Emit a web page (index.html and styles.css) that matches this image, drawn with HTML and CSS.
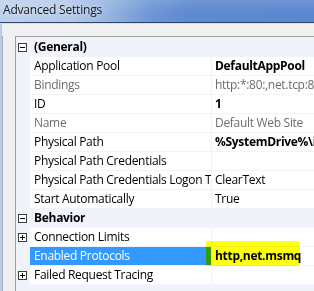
FILE: index.html
```html
<!DOCTYPE html>
<html>
<head>
<meta charset="utf-8">
<link rel="stylesheet" href="styles.css">
</head>
<body>
<div class="window">
  <div class="titlebar"><span class="title">Advanced Settings</span></div>
  <div class="client">
    <div class="grid">
      <div class="row cat">
        <span class="gutter"><svg class="tog" width="9" height="9" viewBox="0 0 9 9"><rect x="0.5" y="0.5" width="8" height="8" fill="#fff" stroke="#3c3c3c"/><path d="M2 4.5h5" stroke="#000"/></svg></span>
        <span class="name">(General)</span>
      </div>
      <div class="row"><span class="gutter"></span><span class="name">Application Pool</span><span class="value b">DefaultAppPool</span></div>
      <div class="row ro"><span class="gutter"></span><span class="name">Bindings</span><span class="value">http:*:80:,net.tcp:808:*,net.pipe:*</span></div>
      <div class="row"><span class="gutter"></span><span class="name">ID</span><span class="value b">1</span></div>
      <div class="row ro"><span class="gutter"></span><span class="name">Name</span><span class="value">Default Web Site</span></div>
      <div class="row"><span class="gutter"></span><span class="name">Physical Path</span><span class="value b">%SystemDrive%\inetpub\wwwroot</span></div>
      <div class="row"><span class="gutter"></span><span class="name">Physical Path Credentials</span><span class="value"></span></div>
      <div class="row"><span class="gutter"></span><span class="name">Physical Path Credentials Logon Type</span><span class="value">ClearText</span></div>
      <div class="row"><span class="gutter"></span><span class="name">Start Automatically</span><span class="value">True</span></div>
      <div class="row cat">
        <span class="gutter"><svg class="tog" width="9" height="9" viewBox="0 0 9 9"><rect x="0.5" y="0.5" width="8" height="8" fill="#fff" stroke="#3c3c3c"/><path d="M2 4.5h5" stroke="#000"/></svg></span>
        <span class="name">Behavior</span>
      </div>
      <div class="row">
        <span class="gutter"><svg class="tog" width="9" height="9" viewBox="0 0 9 9"><rect x="0.5" y="0.5" width="8" height="8" fill="#fff" stroke="#3c3c3c"/><path d="M2 4.5h5M4.5 2v5" stroke="#000"/></svg></span>
        <span class="name">Connection Limits</span><span class="value"></span>
      </div>
      <div class="row sel"><span class="gutter"></span><span class="name">Enabled Protocols</span><span class="value b">http,net.msmq</span></div>
      <div class="row">
        <span class="gutter"><svg class="tog" width="9" height="9" viewBox="0 0 9 9"><rect x="0.5" y="0.5" width="8" height="8" fill="#fff" stroke="#3c3c3c"/><path d="M2 4.5h5M4.5 2v5" stroke="#000"/></svg></span>
        <span class="name">Failed Request Tracing</span><span class="value"></span>
      </div>
    </div>
  </div>
  <div class="marker"></div>
</div>
</body>
</html>
```
FILE: styles.css
```css
html, body {
  margin: 0;
  padding: 0;
  overflow: hidden;
}
body {
  width: 314px;
  height: 291px;
  font-family: "Open Sans", "Noto Sans", sans-serif;
  font-size: 12px;
}
.window {
  position: relative;
  width: 314px;
  height: 291px;
  overflow: hidden;
  background: #f0f0f0;
  display: flex;
  flex-direction: column;
}
.titlebar {
  height: 22px;
  flex: none;
  background:
    linear-gradient(to bottom, rgba(255,255,255,0.12), rgba(255,255,255,0) 60%),
    linear-gradient(to right, #bed1ec 0px, #b2c8e8 70px, #95b3e0 110px, #6e96d6 150px, #5d89d0 190px, #5b87cf 314px);
  border-bottom: 1px solid #2c4468;
  box-shadow: 0 1px 0 #d4e0f0;
  display: flex;
  align-items: center;
  padding-left: 3px;
}
.title {
  color: #1a1a1a;
  font-size: 12px;
  letter-spacing: -0.2px;
  text-shadow: 0 0 6px rgba(255,255,255,0.8);
  margin-top: -3px;
}
.client {
  flex: 1;
  display: flex;
  padding: 12px 0 0 2px;
  border-left: 2px solid #b8cce8;
  margin-top: 1px;
}
.client::before {
  content: "";
  width: 1px;
  background: #a3afbe;
  margin-left: -2px;
  margin-right: 12px;
}
.grid {
  flex: 1;
  background: #f0f3f9;
  border-top: 1px solid #a0a0a0;
  border-left: 1px solid #a0a0a0;
  padding-top: 1px;
  display: flex;
  flex-direction: column;
  min-width: 0;
}
.row {
  display: flex;
  height: 18px;
  margin-bottom: 1px;
  line-height: 18px;
  white-space: nowrap;
  letter-spacing: -0.3px;
}
.gutter {
  box-sizing: border-box;
  width: 14px;
  flex: none;
  display: flex;
  align-items: center;
  padding-left: 2px;
}
.tog {
  display: block;
}
.name {
  box-sizing: border-box;
  width: 181px;
  flex: none;
  padding-left: 4px;
  overflow: hidden;
  background: #fff;
  margin-right: 1px;
  color: #000;
}
.value {
  flex: 1;
  min-width: 0;
  background: #fff;
  padding-left: 3px;
  overflow: hidden;
  color: #000;
}
.b {
  font-weight: bold;
}
.ro .name, .ro .value {
  color: #6d6d6d;
}
.cat .name {
  background: transparent;
  font-weight: bold;
  width: auto;
}
.sel .name {
  background: #3399ff;
  color: #fff;
}
.marker {
  position: absolute;
  left: 206px;
  top: 241px;
  width: 94px;
  height: 25px;
  background: #ffff10;
  mix-blend-mode: multiply;
  border-radius: 2px 3px 4px 1px;
}
```
